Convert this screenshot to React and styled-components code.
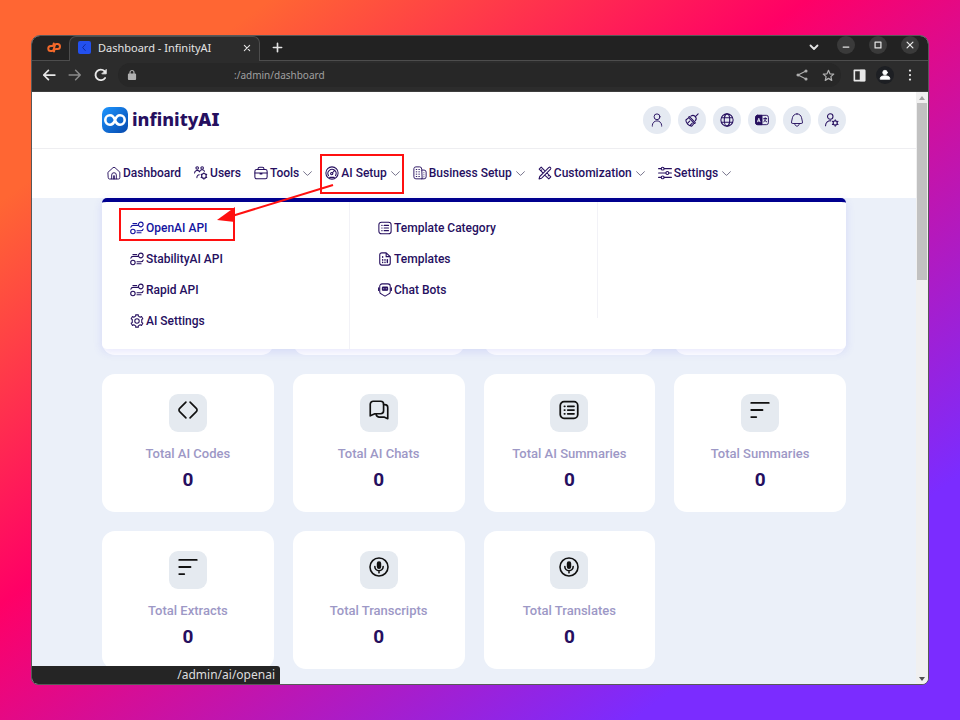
import React from "react";
import styled, { createGlobalStyle, css } from "styled-components";

const GlobalStyle = createGlobalStyle`
  *, *::before, *::after { box-sizing: border-box; }
  body { margin: 0; font-family: Roboto, "Liberation Sans", sans-serif; }
  button, input { font: inherit; color: inherit; border: 0; padding: 0; background: none; }
  a { color: inherit; text-decoration: none; }
  svg { display: block; flex: none; }
`;

const chromeFont = `"Noto Sans", "Open Sans", sans-serif`;
const ink = "#260f5f";

/* ---------- icons ---------- */

const Svg = ({ size = 14, w = 1.6, children }) => (
  <svg
    width={size}
    height={size}
    viewBox="0 0 24 24"
    fill="none"
    stroke="currentColor"
    strokeWidth={w}
    strokeLinecap="round"
    strokeLinejoin="round"
    aria-hidden="true"
  >
    {children}
  </svg>
);

const HomeIcon = () => (
  <Svg>
    <path d="M2 10.5 10.2 3a2.8 2.8 0 0 1 3.6 0L22 10.5V20a2.3 2.3 0 0 1-2.3 2.3H4.300A2.3 2.3 0 0 1 2 20Z" />
    <path d="M8 22v-6.500a4 4 0 0 1 8 0V22M11.500 22v-5.500h1V22" />
  </Svg>
);
const UsersIcon = () => (
  <Svg w={1.8}>
    <circle cx="5.500" cy="3.500" r="2.200" />
    <circle cx="14" cy="3.500" r="2.200" />
    <path d="M1 12a4.500 4.500 0 0 1 8.500-2 4.500 4.500 0 0 1 8.500-1M5 20a4.500 4.500 0 0 1 4-5" />
    <circle cx="17" cy="17" r="4" />
    <path d="M17 11.500V13M17 21v1.500M12.200 14.200l1.300.8M20.500 19l1.300.8M21.800 14.200l-1.300.8M13.500 19l-1.300.8" />
  </Svg>
);
const ToolsIcon = () => (
  <Svg w={1.8}>
    <rect x="1.500" y="6" width="21" height="16" rx="3" />
    <path d="M7 6V4.500A2.500 2.500 0 0 1 9.500 2h5A2.500 2.500 0 0 1 17 4.500V6M1.500 12h21M10.500 12v1.500h3V12" />
  </Svg>
);
const GaugeIcon = () => (
  <Svg w={1.8}>
    <circle cx="12" cy="12" r="10.500" />
    <path d="M6 16.500a7 7 0 1 1 12 0M12.500 12 17 7M8 19.500h8" />
    <circle cx="11.500" cy="13" r="2" />
  </Svg>
);
const BuildingIcon = () => (
  <Svg>
    <path d="M15 22H5a3.500 3.500 0 0 1-3.500-3.500v-14A3.500 3.500 0 0 1 5 1.500h6.500A3.500 3.500 0 0 1 15 5ZM15 7h4a3.500 3.500 0 0 1 3.500 3.500v8A3.500 3.500 0 0 1 19 22h-4" />
    <path d="M5.500 6h1M10 6h1M5.500 10h1M10 10h1M5.500 14h1M10 14h1M5.500 18h1M10 18h1M18.700 11.500v0M18.700 15v0M18.700 18.500v0" />
  </Svg>
);
const PencilRulerIcon = () => (
  <Svg w={1.8}>
    <path d="M14.500 6.800 18.800 2.400a2 2 0 0 1 2.800 2.800L8 19l-2 2-4.200 1.200L3 18l11.500-11.200ZM2 5.500 5.500 2l5.500 5.500M2 5.500 8 11.500M6.500 6.500 5 8M15.500 12l6.500 6.500-3.500 3.500-6.500-6M19 15.500 17.500 17" />
  </Svg>
);
const SlidersIcon = () => (
  <Svg w={1.8}>
    <path d="M1 4.500h4.500M10.500 4.500H23M1 12h12.500M18.500 12H23M1 19.500h4.500M10.500 19.500H23" />
    <circle cx="8" cy="4.500" r="2.500" />
    <circle cx="16" cy="12" r="2.500" />
    <circle cx="8" cy="19.500" r="2.500" />
  </Svg>
);
const ChevronIcon = () => (
  <Svg size={9} w={2.2}>
    <path d="m1.500 7 9 9a2 2 0 0 0 3 0l9-9" />
  </Svg>
);
const ApiIcon = () => (
  <Svg w={1.9}>
    <circle cx="5" cy="18" r="3.800" />
    <circle cx="18.500" cy="6" r="4" />
    <path d="M1.500 10.500C2 8.500 3.500 7.500 5.500 7.500H14M5 4.200h6.500M12 16.800h6.500c2 0 3.500-1 4-3M12 20.200h7" />
  </Svg>
);
const GearIcon = () => (
  <Svg w={1.8}>
    <circle cx="12" cy="12" r="3.800" />
    <path d="M9.700 3.700V1.500h4.600v2.200l3.200 1.800 2.200-1.200 2.300 4-1.900 1.200v5l1.900 1.200-2.300 4-2.200-1.200-3.200 1.800v2.200H9.700v-2.200l-3.200-1.800-2.200 1.200-2.300-4 1.900-1.200v-5L2 8.300l2.300-4 2.200 1.200Z" />
  </Svg>
);
const ListIcon = ({ size = 14, w = 1.8 }) => (
  <Svg size={size} w={w}>
    <rect x="1.500" y="2" width="21" height="20" rx="4.500" />
    <path d="M6.500 7.500h.5M10.500 7.500H18M6.500 12h.5M10.500 12H18M6.500 16.500h.5M10.500 16.500H18" />
  </Svg>
);
const FileIcon = () => (
  <Svg w={1.9}>
    <path d="M3 5a3.500 3.500 0 0 1 3.500-3.500H14L21 8v11a3.500 3.500 0 0 1-3.500 3.500h-11A3.500 3.500 0 0 1 3 19ZM14 1.500V8h7" />
    <path d="M8 8v1M8 13v1M8 17.500v.5M12 17.500v.5M12 13v1M16 13v5" strokeWidth="2.400" />
  </Svg>
);
const BotIcon = () => (
  <Svg w={1.8}>
    <path d="M7 1.500h10a4 4 0 0 1 4 4v10a4 4 0 0 1-3 3.500l-6 3.500L6 19a4 4 0 0 1-3-3.500v-10a4 4 0 0 1 4-4ZM1 8v5M23 8v5" />
    <rect x="7.500" y="7" width="9" height="5.500" rx="1" fill="currentColor" />
    <path d="M10 9.800v0M14 9.800v0" stroke="#fff" />
  </Svg>
);
const PersonIcon = () => (
  <Svg>
    <circle cx="12" cy="6.500" r="5" />
    <path d="M4 22.500v-1a8 8 0 0 1 16 0v1" />
  </Svg>
);
const BroomIcon = () => (
  <Svg w={1.8}>
    <path d="m22.500 1.500-5 5M10 5.500c2.500-2 5.500-1.500 7.300.4 2 1.800 2.500 4.800.5 7.300M8 6.500 17 15.500c1.500 1.500 0 3-1.500 2L7 9c-1.500-1.500-.5-3.500 1-2.500ZM6 8.500 1.500 12c0 5.500 4.500 10 10 10.500l4-4.500M5 17l3-3M9.500 20.500l3-3" />
  </Svg>
);
const GlobeIcon = () => (
  <Svg w={1.8}>
    <circle cx="12" cy="12" r="10.500" />
    <ellipse cx="12" cy="12" rx="4.700" ry="10.500" />
    <path d="M2.500 8h19M2.500 16h19" />
  </Svg>
);
const LanguageIcon = () => (
  <Svg>
    <rect x="1" y="4" width="22" height="16" rx="3.500" />
    <path d="M4.500 4H12v16H4.500A3.500 3.500 0 0 1 1 16.500v-9A3.500 3.500 0 0 1 4.500 4Z" fill="currentColor" />
    <path d="m4.500 15 2-6 2 6M5.200 13.500h2.600" stroke="#e5eaf2" />
    <path d="M15 9.500h5M17.500 8v1.500M19 9.500c-.5 3-2 4.500-4 5.500M16 11.500c.8 2 2 3 4 3.500" />
  </Svg>
);
const BellIcon = () => (
  <Svg>
    <path d="M12 1.500c4 0 7 2.800 7.800 6.500l1.600 7.300a2.200 2.200 0 0 1-2.200 2.700H4.800a2.200 2.200 0 0 1-2.200-2.700L4.200 8C5 4.300 8 1.500 12 1.500ZM8 18c.3 3 1.800 4.500 4 4.500s3.700-1.500 4-4.500" />
  </Svg>
);
const UserGearIcon = () => (
  <Svg w={1.8}>
    <circle cx="9" cy="6" r="4.700" />
    <path d="M1 22v-1a8 8 0 0 1 9-7.500" />
    <circle cx="17.500" cy="17" r="3.600" />
    <path d="M17.500 11.500v2M17.500 20.500v2M12.700 14.200l1.700 1M20.600 18.800l1.700 1M22.300 14.200l-1.700 1M14.400 18.800l-1.700 1" />
  </Svg>
);
const CodeIcon = () => (
  <Svg size={20} w={2}>
    <path d="M9.500 2.500 2 10a2.800 2.800 0 0 0 0 4l7.500 7.500M14.500 2.500 22 10a2.800 2.800 0 0 1 0 4l-7.500 7.500" />
  </Svg>
);
const ChatsIcon = () => (
  <Svg size={20} w={2}>
    <path d="M5 1.500h9A3.500 3.500 0 0 1 17.500 5v8a3.500 3.500 0 0 1-3.500 3.500H7L1.500 19V5A3.500 3.500 0 0 1 5 1.500Z" />
    <path d="M17.500 5.500H19A3.500 3.500 0 0 1 22.500 9v13.500L18 20.500h-6a4 4 0 0 1-3.500-3.500" />
  </Svg>
);
const LinesIcon = () => (
  <Svg size={20} w={2.2}>
    <path d="M1.500 3.500h21M1.500 12H15M1.500 20.500h6" />
  </Svg>
);
const MicIcon = () => (
  <Svg size={20} w={1.9}>
    <circle cx="12" cy="12" r="10.800" />
    <rect x="10.300" y="6" width="3.400" height="7.500" rx="1.700" fill="currentColor" />
    <path d="M7 11.500a5 5 0 0 0 10 0M12 16.500v2.500" />
  </Svg>
);

/* ---------- browser window ---------- */

const Desktop = styled.div`
  display: flex;
  min-height: 100vh;
  padding: 35px 31px;
  background: linear-gradient(to bottom right, #ff6633 14%, #ff0066 42%, #7b2cff 83%);
`;
const Window = styled.div`
  position: relative;
  display: flex;
  flex: 1;
  flex-direction: column;
  min-width: 0;
  overflow: hidden;
  border: 1px solid #585858;
  border-radius: 9px 9px 7px 7px;
  background: #ebf0f9;
`;
const TabStrip = styled.div`
  display: flex;
  height: 25px;
  background: #222222;
  box-shadow: inset 0 -1px #4d4d4d;
  color: #e4e4e4;
`;
const PinnedTab = styled.button`
  display: grid;
  place-items: center;
  width: 37px;
  padding: 0 0 2px 6px;
`;
const ActiveTab = styled.div`
  display: flex;
  align-items: center;
  width: 191px;
  padding: 0 8px 3px;
  border: 1px solid #4d4d4d;
  border-bottom: 0;
  border-radius: 7px 7px 0 0;
  background: #2c2c2c;
  font: 11px/16px ${chromeFont};
`;
const Favicon = styled.span`
  display: grid;
  place-items: center;
  width: 13px;
  height: 13px;
  margin-right: 7px;
  border-radius: 2px;
  background: #2350ee;
  color: #0a1f8a;
`;
const TabTitle = styled.span`
  flex: 1;
  white-space: nowrap;
`;
const StripButton = styled.button`
  display: grid;
  place-items: center;
  width: 34px;
  padding-bottom: 3px;
`;
const WindowControls = styled.div`
  display: flex;
  align-items: center;
  gap: 14px;
  margin-left: auto;
  padding: 0 9px 7px 0;
`;
const RoundControl = styled.button`
  display: grid;
  place-items: center;
  width: 18px;
  height: 18px;
  border-radius: 50%;
  background: ${(p) => (p.$plain ? "transparent" : "#3a3a3a")};
  margin-top: ${(p) => (p.$plain ? "4px" : "0")};
`;
const Toolbar = styled.div`
  display: flex;
  align-items: center;
  height: 31px;
  padding: 0 6px 2px 8px;
  background: #2c2c2c;
  border-bottom: 1px solid #3e3e3e;
  color: #e8e8e8;
`;
const ToolButton = styled.button`
  display: grid;
  place-items: center;
  width: ${(p) => p.$width || 26}px;
  height: 18px;
  color: ${(p) => p.$color || "inherit"};
`;
const AddressBar = styled.label`
  display: flex;
  flex: 1;
  align-items: center;
  min-width: 0;
  height: 24px;
  margin: 0 5px 0 8px;
  padding-left: 8px;
  border-radius: 12px;
  background: #272727;
  color: #b0b0b0;
`;
const AddressInput = styled.input`
  flex: 1;
  min-width: 0;
  padding-left: 96px;
  color: #a0a0a0;
  font: 10px/16px ${chromeFont};
  outline: none;
`;
const Avatar = styled.span`
  display: grid;
  place-items: center;
  width: 18px;
  height: 18px;
  border-radius: 50%;
  background: #1d1f23;
  color: #ffffff;
`;
const Viewport = styled.div`
  display: flex;
  flex: 1;
`;
const Page = styled.div`
  flex: 1;
  min-width: 0;
  color: ${ink};
`;
const Scrollbar = styled.div`
  display: flex;
  flex-direction: column;
  align-items: center;
  width: 12px;
  background: #f0f0f0;
`;
const ScrollArrow = styled.span`
  display: grid;
  place-items: center;
  height: 11px;
  color: ${(p) => (p.$dim ? "#a0a0a0" : "#505050")};
`;
const ScrollThumb = styled.span`
  width: 10px;
  height: 177px;
  margin-bottom: auto;
  background: #c1c1c1;
`;
const StatusBubble = styled.div`
  position: absolute;
  left: 0;
  bottom: 0;
  width: 248px;
  padding: 1px 5px 1px 0;
  border-radius: 0 3px 0 0;
  background: #252525;
  color: #dddddd;
  text-align: right;
  font: 12px/16px ${chromeFont};
`;

/* ---------- site ---------- */

const container = css`
  width: 744px;
  max-width: 100%;
  margin: 0 auto;
`;
const SiteHeader = styled.header`
  background: #ffffff;
  border-bottom: 1px solid #eeeef1;
`;
const HeaderInner = styled.div`
  ${container}
  display: flex;
  align-items: center;
  justify-content: space-between;
  height: 56px;
`;
const Brand = styled.a`
  display: flex;
  align-items: center;
  gap: 4px;
  font: 800 18px/26px "Noto Sans", sans-serif;
`;
const BrandName = styled.span`
  padding-bottom: 2px;
`;
const BrandStrong = styled.span`
  font-weight: 900;
`;
const HeaderActions = styled.div`
  display: flex;
  gap: 7px;
`;
const CircleButton = styled.button`
  display: grid;
  place-items: center;
  width: 28px;
  height: 28px;
  border-radius: 50%;
  background: #e5eaf2;
`;
const NavBar = styled.nav`
  background: #ffffff;
`;
const NavInner = styled.div`
  ${container}
  position: relative;
`;
const NavList = styled.div`
  display: flex;
  gap: 13px;
  height: 49px;
  padding: 0 0 1px 5px;
`;
const highlight = css`
  content: "";
  position: absolute;
  border: 2px solid #ff1010;
`;
const navItem = css`
  position: relative;
  display: flex;
  align-items: center;
  gap: 2px;
  font: 500 12px/16px Roboto, sans-serif;
  white-space: nowrap;
`;
const NavLink = styled.a`
  ${navItem}
`;
const NavButton = styled.button`
  ${navItem}
  ${(p) => p.$marked && css`&::after { ${highlight} inset: 5px -4px 3px -5px; }`}
`;
const NavCaret = styled.span`
  margin-left: 2px;
  color: #5b5775;
`;
const MegaMenu = styled.div`
  position: absolute;
  z-index: 1;
  top: 100%;
  left: 0;
  right: 0;
  display: grid;
  grid-template-columns: repeat(3, 1fr);
  border-top: 4px solid #00008f;
  border-radius: 5px;
  background: #ffffff;
  box-shadow: 0 3px 10px rgba(70, 70, 240, 0.13);
`;
const MenuColumn = styled.div`
  display: flex;
  flex-direction: column;
  align-items: flex-start;
  align-self: ${(p) => (p.$short ? "start" : "stretch")};
  padding: 10px 0 13px 28px;
  border-right: 1px solid #f2f2f7;
`;
const MenuLink = styled.a`
  position: relative;
  display: flex;
  align-items: center;
  gap: 2px;
  height: 31px;
  font: 500 12px/16px Roboto, sans-serif;
  ${(p) => p.$marked && css`
    color: #1414a0;
    &::after { ${highlight} inset: -4px -28px 2px -11px; }
  `}
`;
const Arrow = styled.svg`
  position: absolute;
  z-index: 2;
  left: 114px;
  top: 34px;
  pointer-events: none;
`;
const Cards = styled.main`
  ${container}
  display: grid;
  grid-template-columns: repeat(4, 1fr);
  gap: 19px;
  padding: 19px 0 15px;
`;
const Card = styled.section`
  display: flex;
  flex-direction: column;
  align-items: center;
  min-height: 138px;
  padding-top: 20px;
  border-radius: 13px;
  background: #ffffff;
`;
const CardIcon = styled.span`
  display: flex;
  justify-content: center;
  width: 38px;
  height: 38px;
  padding-top: 6px;
  border-radius: 9px;
  background: #e5eaf0;
  color: #111111;
`;
const CardLabel = styled.h2`
  margin: 14px 0 0;
  color: #9d98c6;
  font: 500 13px/16px Roboto, sans-serif;
`;
const CardValue = styled.strong`
  margin-top: 6px;
  font: 700 19px/24px Roboto, sans-serif;
`;

const actions = [
  ["Profile", PersonIcon],
  ["Clear cache", BroomIcon],
  ["Website", GlobeIcon],
  ["Language", LanguageIcon],
  ["Notifications", BellIcon],
  ["Account settings", UserGearIcon],
];
const nav = [
  { label: "Dashboard", Icon: HomeIcon },
  { label: "Users", Icon: UsersIcon },
  { label: "Tools", Icon: ToolsIcon, menu: true },
  { label: "AI Setup", Icon: GaugeIcon, menu: true, marked: true },
  { label: "Business Setup", Icon: BuildingIcon, menu: true },
  { label: "Customization", Icon: PencilRulerIcon, menu: true },
  { label: "Settings", Icon: SlidersIcon, menu: true },
];
const menuColumns = [
  [
    ["OpenAI API", ApiIcon],
    ["StabilityAI API", ApiIcon],
    ["Rapid API", ApiIcon],
    ["AI Settings", GearIcon],
  ],
  [
    ["Template Category", ListIcon],
    ["Templates", FileIcon],
    ["Chat Bots", BotIcon],
  ],
];
const stats = [
  ["Total AI Codes", <CodeIcon />],
  ["Total AI Chats", <ChatsIcon />],
  ["Total AI Summaries", <ListIcon size={20} w={2.1} />],
  ["Total Summaries", <LinesIcon />],
  ["Total Extracts", <LinesIcon />],
  ["Total Transcripts", <MicIcon />],
  ["Total Translates", <MicIcon />],
];

function BrowserChrome() {
  return (
    <>
      <TabStrip>
        <PinnedTab aria-label="cPanel">
          <svg width="14" height="11" viewBox="0 0 28 22" fill="none" stroke="#f4692a" strokeWidth="4" strokeLinecap="round">
            <path d="M11 8H7.500a5 5 0 0 0 0 10H10c2 0 2.800-1 3.300-3L15.500 7c.5-2 1.500-3 3.500-3h2a5 5 0 0 1 0 10h-3M13.500 3l-1 4M14 19l1-4" />
          </svg>
        </PinnedTab>
        <ActiveTab>
          <Favicon>
            <Svg size={9} w={2}><path d="m14 4-7 8 7 8" /></Svg>
          </Favicon>
          <TabTitle>Dashboard - InfinityAI</TabTitle>
          <button aria-label="Close tab">
            <Svg size={8} w={3.2}><path d="m4 4 16 16M20 4 4 20" /></Svg>
          </button>
        </ActiveTab>
        <StripButton aria-label="New tab">
          <Svg size={11} w={3.6}><path d="M12 3v18M3 12h18" /></Svg>
        </StripButton>
        <WindowControls>
          <RoundControl $plain aria-label="Search tabs">
            <Svg size={12} w={3.6}><path d="m5 9 7 7 7-7" /></Svg>
          </RoundControl>
          <RoundControl aria-label="Minimize">
            <Svg size={10} w={2.6}><path d="M5 17h14" /></Svg>
          </RoundControl>
          <RoundControl aria-label="Maximize">
            <Svg size={10} w={3}><rect x="5" y="5" width="14" height="14" /></Svg>
          </RoundControl>
          <RoundControl aria-label="Close">
            <Svg size={10} w={3}><path d="m5 5 14 14M19 5 5 19" /></Svg>
          </RoundControl>
        </WindowControls>
      </TabStrip>
      <Toolbar>
        <ToolButton $width={18} aria-label="Back">
          <Svg w={3}><path d="M22 12H3M11 4l-8 8 8 8" /></Svg>
        </ToolButton>
        <ToolButton $width={34} $color="#8a8a8a" aria-label="Forward">
          <Svg w={2.6}><path d="M2 12h19M13 4l8 8-8 8" /></Svg>
        </ToolButton>
        <ToolButton $width={18} aria-label="Reload">
          <Svg w={3.2}>
            <path d="M19 17a9 9 0 1 1-1-11.500" />
            <path d="M21 3v7h-7Z" fill="currentColor" strokeWidth="1.500" />
          </Svg>
        </ToolButton>
        <AddressBar>
          <Svg size={12} w={2.4}>
            <rect x="5" y="10" width="14" height="11" rx="1" fill="currentColor" />
            <path d="M8 10V7a4 4 0 0 1 8 0v3" />
          </Svg>
          <AddressInput aria-label="Address" defaultValue=":/admin/dashboard" />
          <ToolButton aria-label="Share">
            <Svg size={12} w={2.2}>
              <path d="M20 4 4 12l16 8" />
              <circle cx="20" cy="4" r="2" fill="currentColor" />
              <circle cx="4" cy="12" r="2" fill="currentColor" />
              <circle cx="20" cy="20" r="2" fill="currentColor" />
            </Svg>
          </ToolButton>
          <ToolButton aria-label="Bookmark">
            <Svg size={13} w={2.2}>
              <path d="m12 2.500 2.700 6.400 7 .6-5.300 4.600 1.600 6.900-6-3.700L6 21l1.600-6.900-5.300-4.600 7-.6Z" />
            </Svg>
          </ToolButton>
        </AddressBar>
        <ToolButton aria-label="Side panel">
          <Svg size={13} w={3}>
            <rect x="2.500" y="2.500" width="19" height="19" />
            <path d="M14 3h7v18h-7Z" fill="currentColor" />
          </Svg>
        </ToolButton>
        <ToolButton aria-label="Profile">
          <Avatar>
            <Svg size={12}>
              <circle cx="12" cy="7" r="4.500" fill="currentColor" />
              <path d="M2.500 20v-1.500C2.500 15 7 13.500 12 13.500s9.500 1.500 9.500 5V20Z" fill="currentColor" />
            </Svg>
          </Avatar>
        </ToolButton>
        <ToolButton $width={24} aria-label="Browser menu">
          <Svg size={12} w={4.5}><path d="M12 3v0M12 12v0M12 21v0" /></Svg>
        </ToolButton>
      </Toolbar>
    </>
  );
}

function Logo() {
  return (
    <Brand href="#home">
      <svg width="26" height="26" viewBox="0 0 26 26" aria-hidden="true">
        <defs>
          <linearGradient id="logo" x1="0" y1="0" x2="1" y2="1">
            <stop offset="0" stopColor="#1e96ff" />
            <stop offset="1" stopColor="#0648ad" />
          </linearGradient>
        </defs>
        <rect width="26" height="26" rx="7" fill="url(#logo)" />
        <path
          d="M13 13c-1-2.900-2.600-4.700-5-4.700a4.700 4.700 0 0 0 0 9.400c2.400 0 4-1.800 5-4.700s2.600-4.700 5-4.700a4.700 4.700 0 0 1 0 9.400c-2.400 0-4-1.800-5-4.700Z"
          fill="none"
          stroke="#fff"
          strokeWidth="2.600"
        />
      </svg>
      <BrandName>infinity<BrandStrong>AI</BrandStrong></BrandName>
    </Brand>
  );
}

function Navigation() {
  return (
    <NavBar>
      <NavInner>
        <NavList>
          {nav.map(({ label, Icon, menu, marked }) =>
            menu ? (
              <NavButton key={label} $marked={marked} aria-expanded={!!marked}>
                <Icon />
                {label}
                <NavCaret><ChevronIcon /></NavCaret>
              </NavButton>
            ) : (
              <NavLink key={label} href="#nav">
                <Icon />
                {label}
              </NavLink>
            )
          )}
        </NavList>
        <MegaMenu>
          {menuColumns.map((items, column) => (
            <MenuColumn key={column} $short={column === 1}>
              {items.map(([label, Icon]) => (
                <MenuLink key={label} href="#menu" $marked={label === "OpenAI API"}>
                  <Icon />
                  {label}
                </MenuLink>
              ))}
            </MenuColumn>
          ))}
        </MegaMenu>
        <Arrow width="120" height="40" viewBox="0 0 120 40" aria-hidden="true">
          <path d="M117 2 16 33" stroke="#ff1010" strokeWidth="2" />
          <path d="M1 37 19 24v15Z" fill="#ff1010" />
        </Arrow>
      </NavInner>
    </NavBar>
  );
}

export default function App() {
  return (
    <Desktop>
      <GlobalStyle />
      <Window>
        <BrowserChrome />
        <Viewport>
          <Page>
            <SiteHeader>
              <HeaderInner>
                <Logo />
                <HeaderActions>
                  {actions.map(([label, Icon]) => (
                    <CircleButton key={label} aria-label={label}><Icon /></CircleButton>
                  ))}
                </HeaderActions>
              </HeaderInner>
            </SiteHeader>
            <Navigation />
            <Cards>
              {[0, 1, 2, 3].map((n) => <Card key={n} aria-hidden="true" />)}
              {stats.map(([label, icon]) => (
                <Card key={label}>
                  <CardIcon>{icon}</CardIcon>
                  <CardLabel>{label}</CardLabel>
                  <CardValue>0</CardValue>
                </Card>
              ))}
            </Cards>
          </Page>
          <Scrollbar>
            <ScrollArrow $dim>
              <svg width="6" height="4" viewBox="0 0 6 4"><path d="M0 4 3 0l3 4Z" fill="currentColor" /></svg>
            </ScrollArrow>
            <ScrollThumb />
            <ScrollArrow>
              <svg width="6" height="4" viewBox="0 0 6 4"><path d="M0 0h6L3 4Z" fill="currentColor" /></svg>
            </ScrollArrow>
          </Scrollbar>
        </Viewport>
        <StatusBubble>/admin/ai/openai</StatusBubble>
      </Window>
    </Desktop>
  );
}
